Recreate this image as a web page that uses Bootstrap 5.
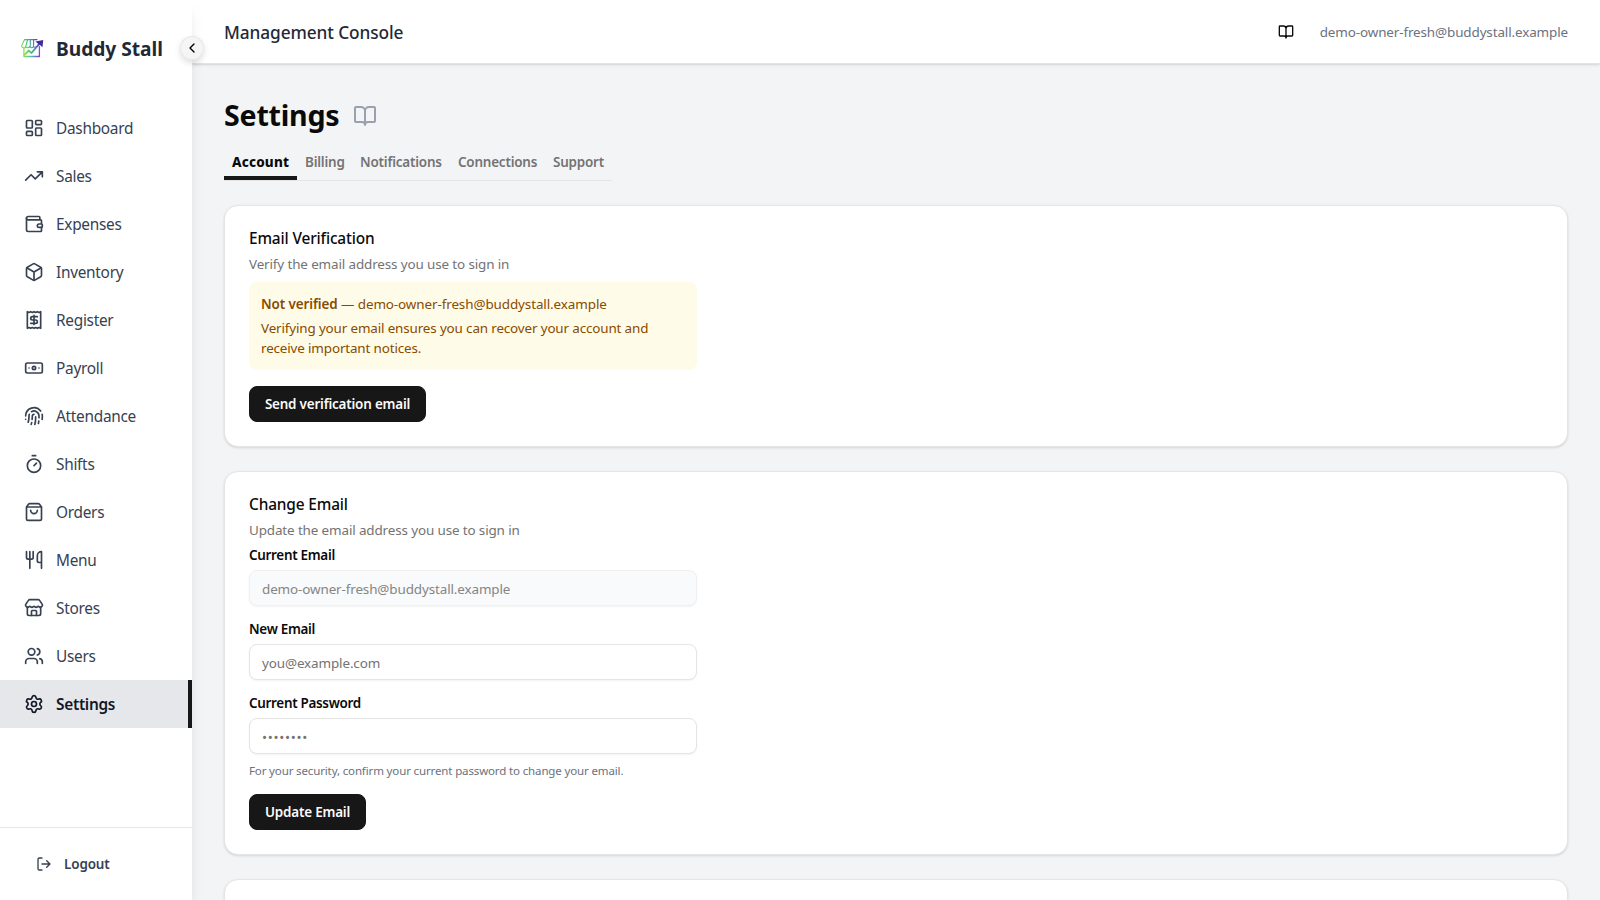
<!DOCTYPE html>
<html lang="en">
<head>
<meta charset="utf-8">
<meta name="viewport" content="width=device-width, initial-scale=1">
<title>Buddy Stall – Settings</title>
<link href="https://cdn.jsdelivr.net/npm/bootstrap@5.3.0/dist/css/bootstrap.min.css" rel="stylesheet">
<style>
  body { font-family: "Noto Sans", "Open Sans", sans-serif; font-size: 13.44px; line-height: 20px; letter-spacing: -.13px; color: #0a0a0a; background: #f3f4f6; }
  svg { display: block; flex: none; }
  .ico { fill: none; stroke: currentColor; stroke-width: 2; stroke-linecap: round; stroke-linejoin: round; }

  /* Sidebar */
  .sidebar { width: 192px; background: #fff; z-index: 3; box-shadow: 0 10px 15px -3px rgba(0,0,0,.1), 0 4px 6px -4px rgba(0,0,0,.1); }
  .brand { height: 96px; padding: 2px 0 0 20px; gap: 12px; font-size: 19.2px; font-weight: 700; letter-spacing: -.03px; color: #1f2937; }
  .brand svg { margin-bottom: 2px; }
  .side-link { height: 48px; padding: 2px 0 0 24px; gap: 12px; color: #374151; font-size: 15.4px; letter-spacing: -.28px; border-radius: 0; }
  .side-link svg { margin-bottom: 2px; }
  .side-link.active { background: #e5e7eb; color: #111827; font-weight: 600; letter-spacing: -.28px; border-right: 4px solid #171717; }
  .side-foot { height: 73px; border-top: 1px solid #e5e7eb; padding-left: 36px; gap: 12px; font-weight: 600; letter-spacing: -.12px; color: #374151; }
  .collapse-btn { left: 180px; top: 36px; width: 24px; height: 24px; background: #f5f5f5; border-radius: 50%; box-shadow: inset 0 0 0 1px #e8e8e8, 0 3px 6px rgba(0,0,0,.13); }

  /* Header and page heading */
  .topbar { height: 64px; background: #fff; border-bottom: 1px solid #e1e3e6; box-shadow: 0 1px 3px rgba(0,0,0,.1), 0 1px 2px -1px rgba(0,0,0,.1); padding: 0 32px; }
  .topbar-title { padding-top: 2px; font-size: 17.3px; font-weight: 500; letter-spacing: -.11px; color: #1f2937; }
  .user-mail { color: #6b7280; margin-left: 26px; letter-spacing: -.12px; }
  .heading { padding-top: 24px; height: 80px; }
  .heading .book { color: #99a1af; margin-left: 6px; }
  h1 { font-size: 28.6px; line-height: 36px; font-weight: 700; letter-spacing: -.22px; padding-bottom: 2px; }
  .page-tabs { height: 37px; border-bottom: 1px solid #e5e5e5; width: 388px; }
  .page-tabs .nav-link { height: 36px; padding: 8px 0 0 8px; color: #737373; font-weight: 600; letter-spacing: -.2px; border-radius: 0; }
  .page-tabs .nav-link.active { width: 73px; color: #0a0a0a; font-weight: 800; border-bottom: 4px solid #171717; letter-spacing: .18px; }
  .tab-billing { width: 55px; }
  .tab-notes { width: 98px; }
  .tab-conn { width: 95px; }

  /* Cards and forms */
  .panel { --bs-card-border-color: #e5e5e5; --bs-card-border-radius: 14px; --bs-card-inner-border-radius: 13px; padding: 24px; box-shadow: 0 1px 3px rgba(0,0,0,.1), 0 1px 2px -1px rgba(0,0,0,.1); }
  .panel h2 { font-size: 15.4px; line-height: 16px; font-weight: 500; letter-spacing: -.14px; padding-top: 1px; margin-bottom: 7px; }
  .panel .desc { color: #737373; margin-bottom: 8px; }
  .form-col { width: 448px; }
  .notice { background: #fefce8; color: #894b00; border-radius: 8px; padding: 12px; margin-bottom: 16px; letter-spacing: -.15px; }
  .notice p:first-child { letter-spacing: -.1px; }
  .notice strong { font-weight: 600; }
  .form-label { font-weight: 600; letter-spacing: -.3px; line-height: 14px; margin-bottom: 8px; display: block; }
  .form-control { height: 36px; padding: 6px 12px 4px; font-size: 13.44px; letter-spacing: -.12px; border-color: #e5e5e5; border-radius: 8px; box-shadow: 0 1px 2px rgba(0,0,0,.05); }
  .form-control::placeholder { color: #737373; }
  .form-control:disabled { background: #f9fafb; opacity: 1; border-color: #f0f0f1; color: #858585; }
  .form-control.pw { letter-spacing: .68px; }
  .hint { font-size: 11.52px; line-height: 16px; letter-spacing: -.144px; color: #6b7280; margin: 9px 0 -1px; }
  .btn-ink { --bs-btn-bg: #171717; --bs-btn-color: #fafafa; --bs-btn-border-color: #171717; --bs-btn-border-radius: 8px; height: 36px; padding: 0; font-size: 13.44px; line-height: 20px; font-weight: 600; letter-spacing: -.2px; }
  .send-btn { width: 177px; }
  .update-btn { width: 117px; }
  .panel-tail { min-height: 200px; }
</style>
</head>
<body class="vh-100 overflow-hidden">
<div class="d-flex h-100">

  <aside class="sidebar position-relative d-flex flex-column flex-shrink-0">
    <div class="brand d-flex align-items-center">
      <svg width="24" height="24" viewBox="0 0 24 24" fill="none" stroke="url(#brandGrad)" stroke-linejoin="round" stroke-linecap="round">
        <defs>
          <linearGradient id="brandGrad" gradientUnits="userSpaceOnUse" x1="2" y1="16" x2="22" y2="8"><stop offset="0" stop-color="#a3e635"/><stop offset=".4" stop-color="#3fc380"/><stop offset=".68" stop-color="#5b6fd0"/><stop offset="1" stop-color="#4527a0"/></linearGradient>
          <linearGradient id="frameGrad" gradientUnits="userSpaceOnUse" x1="3" y1="12" x2="21" y2="16"><stop offset="0" stop-color="#a3e635"/><stop offset=".5" stop-color="#4fc3a0"/><stop offset="1" stop-color="#7c3aed"/></linearGradient>
        </defs>
        <path stroke-width="1.100" d="M17 3.600H4.600L1.800 9.200a2 2 0 0 0 3.900 1.300 2.100 2.100 0 0 0 3.900 0 2.100 2.100 0 0 0 3.900 0 1.800 1.800 0 0 0 2.700.3M7.500 4 5.900 10M10.300 4v6.200M13.600 4v6.200"/>
        <path stroke="url(#frameGrad)" stroke-width="1.300" d="M3.900 11.500V20.500H19.400V10.500"/>
        <path stroke-width="1.900" d="M4.500 18.800 8.700 14.600 11.500 17 19.500 7.500"/>
        <path fill="#4527a0" stroke="none" d="M15.500 5.600 23.200 4 22.500 11.300 20.300 9.200 18.600 8.300Z"/>
      </svg>
      <span>Buddy Stall</span>
    </div>

    <nav class="nav flex-column flex-grow-1 pt-2">
      <a class="side-link nav-link d-flex align-items-center" href="#"><svg class="ico" width="20" height="20" viewBox="0 0 24 24"><rect width="7" height="9" x="3" y="3" rx="1"/><rect width="7" height="5" x="14" y="3" rx="1"/><rect width="7" height="9" x="14" y="12" rx="1"/><rect width="7" height="5" x="3" y="16" rx="1"/></svg>Dashboard</a>
      <a class="side-link nav-link d-flex align-items-center" href="#"><svg class="ico" width="20" height="20" viewBox="0 0 24 24"><path d="M22 7 13.500 15.500 8.500 10.500 2 17M16 7h6v6"/></svg>Sales</a>
      <a class="side-link nav-link d-flex align-items-center" href="#"><svg class="ico" width="20" height="20" viewBox="0 0 24 24"><path d="M19 7V4a1 1 0 0 0-1-1H5a2 2 0 0 0 0 4h15a1 1 0 0 1 1 1v4h-3a2 2 0 0 0 0 4h3a1 1 0 0 0 1-1v-2a1 1 0 0 0-1-1"/><path d="M3 5v14a2 2 0 0 0 2 2h15a1 1 0 0 0 1-1v-4"/></svg>Expenses</a>
      <a class="side-link nav-link d-flex align-items-center" href="#"><svg class="ico" width="20" height="20" viewBox="0 0 24 24"><path d="M21 8a2 2 0 0 0-1-1.730l-7-4a2 2 0 0 0-2 0l-7 4A2 2 0 0 0 3 8v8a2 2 0 0 0 1 1.730l7 4a2 2 0 0 0 2 0l7-4A2 2 0 0 0 21 16Z"/><path d="m3.300 7 8.700 5 8.700-5M12 22V12"/></svg>Inventory</a>
      <a class="side-link nav-link d-flex align-items-center" href="#"><svg class="ico" width="20" height="20" viewBox="0 0 24 24"><path d="M4 2v20l2-1 2 1 2-1 2 1 2-1 2 1 2-1 2 1V2l-2 1-2-1-2 1-2-1-2 1-2-1-2 1Z"/><path d="M16 8h-6a2 2 0 1 0 0 4h4a2 2 0 1 1 0 4H8M12 17.500v-11"/></svg>Register</a>
      <a class="side-link nav-link d-flex align-items-center" href="#"><svg class="ico" width="20" height="20" viewBox="0 0 24 24"><rect width="20" height="12" x="2" y="6" rx="2"/><circle cx="12" cy="12" r="2"/><path d="M6 12h.01M18 12h.01"/></svg>Payroll</a>
      <a class="side-link nav-link d-flex align-items-center" href="#"><svg class="ico" width="20" height="20" viewBox="0 0 24 24"><path d="M12 10a2 2 0 0 0-2 2c0 1.020-.1 2.510-.26 4M14 13.120c0 2.380 0 6.380-1 8.880M17.290 21.020c.12-.6.43-2.300.5-3.020M2 12a10 10 0 0 1 18-6M2 16h.01M21.800 16c.2-2 .131-5.354 0-6M5 19.500C5.500 18 6 15 6 12a6 6 0 0 1 .34-2M8.650 22c.21-.66.45-1.320.57-2M9 6.800a6 6 0 0 1 9 5.200v2"/></svg>Attendance</a>
      <a class="side-link nav-link d-flex align-items-center" href="#"><svg class="ico" width="20" height="20" viewBox="0 0 24 24"><path d="M10 2h4M12 14l3-3"/><circle cx="12" cy="14" r="8"/></svg>Shifts</a>
      <a class="side-link nav-link d-flex align-items-center" href="#"><svg class="ico" width="20" height="20" viewBox="0 0 24 24"><path d="M16 10a4 4 0 0 1-8 0M3.103 6.034h17.794"/><path d="M3.400 5.467a2 2 0 0 0-.4 1.200V20a2 2 0 0 0 2 2h14a2 2 0 0 0 2-2V6.667a2 2 0 0 0-.4-1.200l-2-2.667A2 2 0 0 0 17 2H7a2 2 0 0 0-1.600.8z"/></svg>Orders</a>
      <a class="side-link nav-link d-flex align-items-center" href="#"><svg class="ico" width="20" height="20" viewBox="0 0 24 24"><path d="M3 2v7c0 1.100.9 2 2 2h4a2 2 0 0 0 2-2V2M7 2v20M21 15V2a5 5 0 0 0-5 5v6c0 1.100.9 2 2 2h3Zm0 0v7"/></svg>Menu</a>
      <a class="side-link nav-link d-flex align-items-center" href="#"><svg class="ico" width="20" height="20" viewBox="0 0 24 24"><path d="M15 21v-5a1 1 0 0 0-1-1h-4a1 1 0 0 0-1 1v5"/><path d="M17.774 10.310a1.120 1.120 0 0 0-1.549 0 2.500 2.500 0 0 1-3.451 0 1.120 1.120 0 0 0-1.548 0 2.500 2.500 0 0 1-3.452 0 1.120 1.120 0 0 0-1.549 0 2.500 2.500 0 0 1-3.770-3.248l2.889-4.184A2 2 0 0 1 7 2h10a2 2 0 0 1 1.653.873l2.895 4.192a2.500 2.500 0 0 1-3.774 3.244"/><path d="M4 10.950V19a2 2 0 0 0 2 2h12a2 2 0 0 0 2-2v-8.050"/></svg>Stores</a>
      <a class="side-link nav-link d-flex align-items-center" href="#"><svg class="ico" width="20" height="20" viewBox="0 0 24 24"><path d="M16 21v-2a4 4 0 0 0-4-4H6a4 4 0 0 0-4 4v2"/><circle cx="9" cy="7" r="4"/><path d="M22 21v-2a4 4 0 0 0-3-3.870M16 3.128a4 4 0 0 1 0 7.744"/></svg>Users</a>
      <a class="side-link nav-link active d-flex align-items-center" href="#"><svg class="ico" width="20" height="20" viewBox="0 0 24 24"><path d="M9.671 4.136a2.340 2.340 0 0 1 4.659 0 2.340 2.340 0 0 0 3.319 1.915 2.340 2.340 0 0 1 2.330 4.033 2.340 2.340 0 0 0 0 3.831 2.340 2.340 0 0 1-2.330 4.033 2.340 2.340 0 0 0-3.319 1.915 2.340 2.340 0 0 1-4.659 0 2.340 2.340 0 0 0-3.320-1.915 2.340 2.340 0 0 1-2.330-4.033 2.340 2.340 0 0 0 0-3.831A2.340 2.340 0 0 1 6.350 6.051a2.340 2.340 0 0 0 3.319-1.915"/><circle cx="12" cy="12" r="3"/></svg>Settings</a>
    </nav>

    <div class="side-foot d-flex align-items-center">
      <svg class="ico" width="16" height="16" viewBox="0 0 24 24"><path d="M9 21H5a2 2 0 0 1-2-2V5a2 2 0 0 1 2-2h4M16 17l5-5-5-5M21 12H9"/></svg>Logout
    </div>

    <button class="collapse-btn position-absolute border-0 p-0 d-flex align-items-center justify-content-center" aria-label="Collapse sidebar">
      <svg class="ico" width="16" height="16" viewBox="0 0 24 24"><path d="m15 18-6-6 6-6"/></svg>
    </button>
  </aside>

  <div class="flex-grow-1 d-flex flex-column">
    <header class="topbar d-flex align-items-center justify-content-between flex-shrink-0">
      <div class="topbar-title">Management Console</div>
      <div class="d-flex align-items-center">
        <svg class="ico" width="16" height="16" viewBox="0 0 24 24"><path d="M12 7v14M3 18a1 1 0 0 1-1-1V4a1 1 0 0 1 1-1h5a4 4 0 0 1 4 4 4 4 0 0 1 4-4h5a1 1 0 0 1 1 1v13a1 1 0 0 1-1 1h-6a3 3 0 0 0-3 3 3 3 0 0 0-3-3z"/></svg>
        <span class="user-mail">demo-owner-fresh@buddystall.example</span>
      </div>
    </header>

    <main class="flex-grow-1 overflow-hidden px-4">
      <div class="px-2">
        <div class="heading d-flex align-items-center gap-2">
          <h1 class="mb-0">Settings</h1>
          <svg class="ico book" width="24" height="24" viewBox="0 0 24 24"><path d="M12 7v14M3 18a1 1 0 0 1-1-1V4a1 1 0 0 1 1-1h5a4 4 0 0 1 4 4 4 4 0 0 1 4-4h5a1 1 0 0 1 1 1v13a1 1 0 0 1-1 1h-6a3 3 0 0 0-3 3 3 3 0 0 0-3-3z"/></svg>
        </div>
        <nav class="page-tabs nav flex-nowrap">
          <a class="nav-link active" href="#">Account</a>
          <a class="nav-link tab-billing" href="#">Billing</a>
          <a class="nav-link tab-notes" href="#">Notifications</a>
          <a class="nav-link tab-conn" href="#">Connections</a>
          <a class="nav-link" href="#">Support</a>
        </nav>

        <div class="d-flex flex-column gap-4 mt-4">
          <section class="card panel">
            <h2>Email Verification</h2>
            <p class="desc">Verify the email address you use to sign in</p>
            <div class="form-col">
              <div class="notice">
                <p class="mb-1"><strong>Not verified</strong> — demo-owner-fresh@buddystall.example</p>
                <p class="mb-0">Verifying your email ensures you can recover your account and receive important notices.</p>
              </div>
              <button class="btn btn-ink d-block send-btn">Send verification email</button>
            </div>
          </section>

          <section class="card panel">
            <h2>Change Email</h2>
            <p class="desc">Update the email address you use to sign in</p>
            <form class="form-col">
              <div class="mb-3">
                <label class="form-label" for="cur">Current Email</label>
                <input class="form-control" id="cur" type="email" value="demo-owner-fresh@buddystall.example" disabled>
              </div>
              <div class="mb-3">
                <label class="form-label" for="new">New Email</label>
                <input class="form-control" id="new" type="email" placeholder="you@example.com">
              </div>
              <div class="mb-3">
                <label class="form-label" for="pw">Current Password</label>
                <input class="form-control pw" id="pw" type="password" placeholder="••••••••">
                <p class="hint">For your security, confirm your current password to change your email.</p>
              </div>
              <button class="btn btn-ink d-block update-btn" type="button">Update Email</button>
            </form>
          </section>

          <section class="card panel panel-tail"></section>
        </div>
      </div>
    </main>
  </div>
</div>
<script src="https://cdn.jsdelivr.net/npm/bootstrap@5.3.0/dist/js/bootstrap.bundle.min.js"></script>
</body>
</html>
